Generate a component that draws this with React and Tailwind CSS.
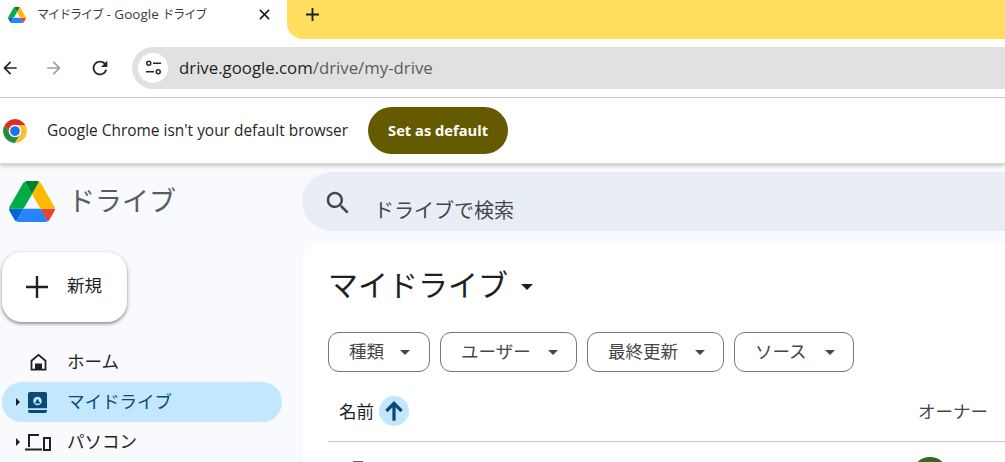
import React from "react";

const JP = "font-['Noto_Sans_CJK_JP','Noto_Sans',sans-serif]";

function DriveLogo({ className }) {
  return (
    <svg viewBox="0 0 87.3 78" className={className}>
      <path d="m6.6 66.85 3.85 6.65c.8 1.4 1.95 2.5 3.3 3.3l13.75-23.8h-27.5c0 1.55.4 3.1 1.2 4.5z" fill="#0066da" />
      <path d="m43.65 25-13.75-23.8c-1.35.8-2.5 1.9-3.3 3.3l-25.4 44a9.06 9.06 0 0 0 -1.2 4.5h27.5z" fill="#00ac47" />
      <path d="m73.55 76.8c1.35-.8 2.5-1.9 3.3-3.3l1.6-2.75 7.65-13.25c.8-1.4 1.2-2.95 1.2-4.5h-27.502l5.852 11.5z" fill="#ea4335" />
      <path d="m43.65 25 13.75-23.8c-1.35-.8-2.9-1.2-4.5-1.2h-18.5c-1.6 0-3.15.45-4.5 1.2z" fill="#00832d" />
      <path d="m59.8 53h-32.3l-13.75 23.8c1.35.8 2.9 1.2 4.5 1.2h50.8c1.6 0 3.15-.45 4.5-1.2z" fill="#2684fc" />
      <path d="m73.4 26.5-12.7-22c-.8-1.4-1.95-2.5-3.3-3.3l-13.75 23.8 16.15 28h27.45c0-1.55-.4-3.1-1.2-4.5z" fill="#ffba00" />
    </svg>
  );
}

function ChromeLogo() {
  return (
    <svg viewBox="0 0 48 48" className="h-[26px] w-[26px] shrink-0">
      <path d="M4.95 13A22 22 0 0 0 24 46l9.53-16.5a11 11 0 0 1-19.06 0z" fill="#1e8e3e" />
      <path d="M43.05 13A22 22 0 0 1 24 46l9.53-16.5A11 11 0 0 0 24 13z" fill="#fbc02d" />
      <path d="M4.95 13a22 22 0 0 1 38.1 0H24a11 11 0 0 0-9.53 16.5z" fill="#d93025" />
      <circle cx="24" cy="24" r="11.5" fill="#fff" />
      <circle cx="24" cy="24" r="9" fill="#1a73e8" />
    </svg>
  );
}

function Caret({ className }) {
  return (
    <svg viewBox="0 0 10 5" className={className} fill="currentColor">
      <path d="M0 0h10L5 5z" />
    </svg>
  );
}

function SideArrow() {
  return (
    <svg viewBox="0 0 4 8" className="h-[8px] w-[4px] shrink-0 text-[#1f1f1f]" fill="currentColor">
      <path d="M0 0l4 4-4 4z" />
    </svg>
  );
}

function FilterChip({ label, width, gap }) {
  return (
    <button type="button" className={`flex h-[40px] items-center rounded-[11px] border border-[#747775] pl-[20px] text-[#444746] ${width} ${gap}`}>
      <span className="mb-[3px] text-[17.500px] leading-none">{label}</span>
      <Caret className="h-[5px] w-[10px] shrink-0" />
    </button>
  );
}

function App() {
  return (
    <div className={`flex h-[462px] w-[1005px] flex-col overflow-hidden bg-white ${JP}`}>
      {/* tab strip */}
      <div className="flex h-[39px] shrink-0">
        <div className="flex h-[29px] w-[287px] items-center pl-[8px]">
          <DriveLogo className="h-[16px] w-[18px] shrink-0" />
          <span className="ml-[11px] w-[222px] whitespace-nowrap text-[12px] tracking-[-1px] text-[#3c3c3c]">
            マイドライブ<span className="font-['Open_Sans',sans-serif] text-[13.500px] tracking-normal"> - Google </span>ドライブ
          </span>
          <svg viewBox="0 0 12 12" className="h-[11px] w-[11px] text-[#1f1f1f]" stroke="currentColor" strokeWidth="1.8">
            <path d="M1 1l10 10M11 1L1 11" />
          </svg>
        </div>
        <div className="flex-1 rounded-bl-[16px] bg-[#FFDD5E] pl-[19px] pt-[8px]">
          <svg viewBox="0 0 14 14" className="h-[13px] w-[13px] text-[#1f1f1f]" stroke="currentColor" strokeWidth="2">
            <path d="M7 0v14M0 7h14" />
          </svg>
        </div>
      </div>

      {/* toolbar */}
      <div className="flex h-[59px] shrink-0 items-center border-b border-[#c9c9c9] pb-[1px]">
        <svg viewBox="0 0 24 24" className="h-[20px] w-[20px] shrink-0 text-[#262626]" fill="currentColor">
          <path d="M20 11H7.83l5.59-5.59L12 4l-8 8 8 8 1.41-1.41L7.83 13H20v-2z" />
        </svg>
        <svg viewBox="0 0 24 24" className="ml-[24px] h-[20px] w-[20px] shrink-0 text-[#9e9e9e]" fill="currentColor">
          <path d="M4 11h12.17l-5.59-5.59L12 4l8 8-8 8-1.41-1.41L16.17 13H4v-2z" />
        </svg>
        <svg viewBox="0 0 24 24" className="ml-[25px] h-[22px] w-[22px] shrink-0 text-[#262626]" fill="currentColor">
          <path d="M17.65 6.35C16.2 4.9 14.21 4 12 4c-4.42 0-7.99 3.58-7.99 8s3.57 8 7.99 8c3.73 0 6.84-2.55 7.73-6h-2.08c-.82 2.33-3.04 4-5.65 4-3.31 0-6-2.69-6-6s2.69-6 6-6c1.66 0 3.14.69 4.22 1.78L13 11h7V4l-2.35 2.35z" />
        </svg>
        <div className="ml-[21px] flex h-[42px] flex-1 items-center rounded-l-full bg-[#E1E1E1] pl-[6px]">
          <div className="flex h-[30px] w-[30px] items-center justify-center rounded-full bg-white">
            <svg viewBox="0 0 18 18" className="h-[17px] w-[17px] text-[#262626]" fill="none" stroke="currentColor" strokeWidth="1.6">
              <circle cx="4" cy="4.5" r="2.1" />
              <path d="M8.5 4.5H17M1 13.5h8.5" />
              <circle cx="14" cy="13.5" r="2.1" />
            </svg>
          </div>
          <span className="ml-[11px] font-['Open_Sans',sans-serif] text-[16.800px] text-[#1f1f1f]">
            drive.google.com<span className="text-[#5c5c5c]">/drive/my-drive</span>
          </span>
        </div>
      </div>

      {/* default browser bar */}
      <div className="z-10 flex h-[66px] shrink-0 items-center border-b border-[#dcd9cc] bg-white pl-[2px] shadow-[0_2px_4px_rgba(0,0,0,0.2)]">
        <ChromeLogo />
        <span className="ml-[19px] font-['Open_Sans',sans-serif] text-[15.450px] text-[#262626]">Google Chrome isn't your default browser</span>
        <button type="button" className="ml-[20px] h-[47px] w-[140px] rounded-full bg-[#655A00] font-['Open_Sans',sans-serif] text-[14.700px] font-bold text-white">
          Set as default
        </button>
      </div>

      {/* drive page */}
      <div className="flex min-h-0 flex-1 bg-[#F8FAFD]">
        <div className="w-[302px] shrink-0">
          <div className="flex items-center pl-[9px] pt-[17px]">
            <DriveLogo className="h-[41px] w-[46px]" />
            <span className="mb-[5px] ml-[13px] text-[27px] leading-none text-[#5a5d60]">ドライブ</span>
          </div>
          <button type="button" className="ml-[2px] mt-[30px] flex h-[70px] w-[125px] items-center rounded-[20px] bg-white pl-[24px] shadow-[0_2px_3px_rgba(60,64,67,0.45),0_1px_4px_1px_rgba(60,64,67,0.15)]">
            <svg viewBox="0 0 22 22" className="h-[22px] w-[22px] text-[#1f1f1f]" stroke="currentColor" strokeWidth="2.4">
              <path d="M11 0v22M0 11h22" />
            </svg>
            <span className="mb-[4px] ml-[19px] text-[17.500px] leading-none text-[#1f1f1f]">新規</span>
          </button>

          <div className="mt-[20px] flex h-[40px] items-center pl-[28px] text-[#1f1f1f]">
            <svg viewBox="0 0 24 24" className="h-[21px] w-[21px] shrink-0" fill="currentColor">
              <path fillRule="evenodd" d="M12 2L3 9.500V21h18V9.500L12 2zm0 2.700l7 5.800V19h-3v-6H8v6H5v-8.500l7-5.800z" />
            </svg>
            <span className="mb-[2px] ml-[18px] text-[17.500px] leading-none">ホーム</span>
          </div>

          <div className="ml-[2px] flex h-[40px] w-[280px] items-center rounded-full bg-[#C2E7FF] pl-[14px] text-[#0B4A75]">
            <SideArrow />
            <svg viewBox="0 0 20 22" className="ml-[8px] h-[21px] w-[19px] shrink-0" fill="currentColor">
              <path fillRule="evenodd" d="M2 0h16a2 2 0 0 1 2 2v15H0V2a2 2 0 0 1 2-2zm8 5a4.500 4.500 0 1 0 0 9 4.500 4.500 0 0 0 0-9zM0 19h20v1a2 2 0 0 1-2 2H2a2 2 0 0 1-2-2z" />
              <path d="M10 7l3 5H7z" fill="#0B4A75" />
            </svg>
            <span className="mb-[2px] ml-[20px] text-[17.500px] leading-none text-[#0A4A78]">マイドライブ</span>
          </div>

          <div className="flex h-[40px] items-center pl-[16px] text-[#1f1f1f]">
            <SideArrow />
            <svg viewBox="0 0 26 18" className="ml-[5px] h-[18px] w-[26px] shrink-0" fill="none" stroke="currentColor" strokeWidth="2">
              <path d="M14 2H4v12M0 16.500h17" />
              <rect x="19" y="5" width="6" height="12" />
            </svg>
            <span className="mb-[2px] ml-[16px] text-[17.500px] leading-none">パソコン</span>
          </div>
        </div>

        <div className="min-w-0 flex-1 pl-[1px]">
          <div className="-ml-[1px] mt-[8px] flex h-[59px] items-center rounded-l-[30px] bg-[#E9EEF6] pl-[21px]">
            <svg viewBox="0 0 24 24" className="mt-[3px] h-[30px] w-[30px] shrink-0 text-[#444746]" fill="currentColor">
              <path d="M15.500 14h-.79l-.28-.27C15.410 12.590 16 11.110 16 9.500 16 5.910 13.090 3 9.500 3S3 5.910 3 9.500 5.910 16 9.500 16c1.610 0 3.090-.59 4.230-1.570l.27.28v.79l5 4.990L20.490 19l-4.990-5zm-6 0C7.010 14 5 11.990 5 9.500S7.010 5 9.500 5 14 7.010 14 9.500 11.990 14 9.500 14z" />
            </svg>
            <span className="ml-[21px] mt-[16px] text-[20px] leading-none text-[#444746]">ドライブで検索</span>
          </div>

          <div className="mt-[12px] h-[300px] rounded-tl-[16px] bg-white pl-[25px]">
            <div className="flex h-[84px] items-center text-[#1f1f1f]">
              <span className="mb-[4px] text-[30px] leading-none">マイドライブ</span>
              <Caret className="ml-[13px] mt-[3px] h-[6px] w-[12px]" />
            </div>
            <div className="mt-[5px] flex gap-[10px]">
              <FilterChip label="種類" width="w-[102px]" gap="gap-[16px]" />
              <FilterChip label="ユーザー" width="w-[137px]" gap="gap-[17px]" />
              <FilterChip label="最終更新" width="w-[137px]" gap="gap-[17px]" />
              <FilterChip label="ソース" width="w-[120px]" gap="gap-[18px]" />
            </div>
            <div className="mt-[10px] flex h-[60px] items-center border-b border-[#c7c7c7] pl-[11px] pb-[1px] text-[#1f1f1f]">
              <span className="text-[17.500px]">名前</span>
              <div className="ml-[5px] flex h-[30px] w-[30px] items-center justify-center rounded-full bg-[#C2E7FF]">
                <svg viewBox="0 0 24 24" className="h-[26px] w-[26px] text-[#0B4A75]" fill="none" stroke="currentColor" strokeWidth="3">
                  <path d="M12 21V6M5 12l7-7 7 7" />
                </svg>
              </div>
              <span className="ml-auto mr-[17px] text-[17.500px] text-[#444746]">オーナー</span>
            </div>
            <div className="flex pt-[15px]">
              <div className="ml-[25px] mt-[4px] h-[2px] w-[10px] bg-[#5f6368]" />
              <div className="ml-[549px] h-[36px] w-[36px] rounded-full bg-[#33691E]" />
            </div>
          </div>
        </div>
      </div>
    </div>
  );
}

export default App;
